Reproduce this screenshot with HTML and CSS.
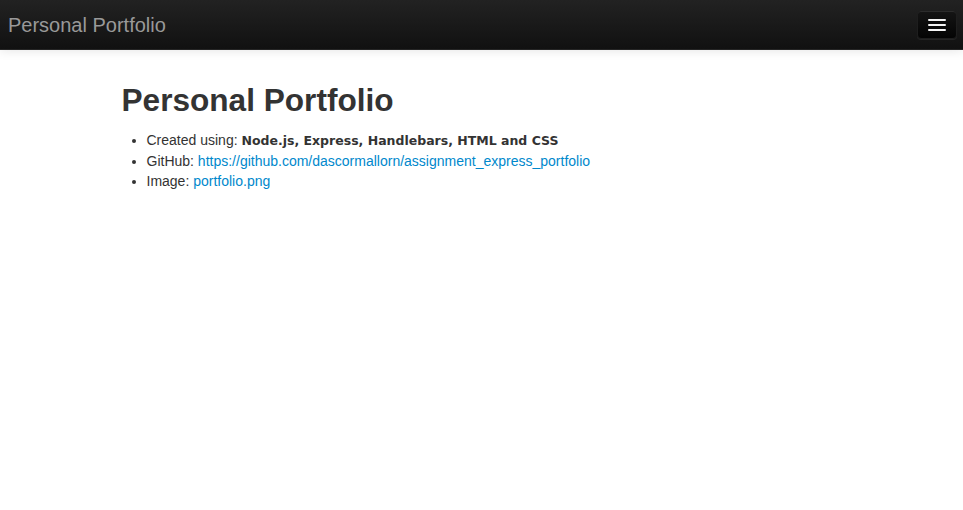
FILE: index.html
```html
<!DOCTYPE html>
<html>
<head>
<meta charset="utf-8">
<title>Personal Portfolio</title>
<link rel="stylesheet" href="styles.css">
</head>
<body>
<header class="navbar">
  <a class="brand" href="#">Personal Portfolio</a>
  <button class="toggle" type="button" aria-label="Menu">
    <span class="bar"></span><span class="bar"></span><span class="bar"></span>
  </button>
</header>
<main class="container">
  <h1 class="title">Personal Portfolio</h1>
  <ul class="details">
    <li>Created using: <strong class="tech">Node.js, Express, Handlebars, HTML and CSS</strong></li>
    <li>GitHub: <a href="#">https://github.com/dascormallorn/assignment_express_portfolio</a></li>
    <li>Image: <a href="#">portfolio.png</a></li>
  </ul>
</main>
</body>
</html>
```
FILE: styles.css
```css
html, body {
  margin: 0;
  padding: 0;
  background: #fff;
}
body {
  font-family: "Liberation Sans", Arial, sans-serif;
  font-size: 14px;
  line-height: 20px;
  color: #333;
}
.navbar {
  height: 49px;
  display: flex;
  align-items: center;
  justify-content: space-between;
  padding: 0 6px 0 8px;
  background: linear-gradient(to bottom, #222 0%, #111 100%);
  border-bottom: 1px solid #252525;
  box-shadow: 0 1px 10px rgba(0, 0, 0, 0.1);
}
.brand {
  color: #999;
  font-size: 20px;
  text-decoration: none;
  line-height: 20px;
}
.toggle {
  width: 40px;
  height: 29px;
  padding: 0;
  display: flex;
  flex-direction: column;
  align-items: center;
  justify-content: center;
  gap: 3px;
  background: linear-gradient(to bottom, #151515 0%, #040404 100%);
  border: 1px solid #1e1e1e;
  border-radius: 4px;
  box-shadow: inset 0 1px 0 rgba(255,255,255,0.1), 0 1px 0 rgba(255,255,255,0.075);
}
.bar {
  display: block;
  width: 18px;
  height: 2px;
  background: #f5f5f5;
  border-radius: 1px;
  box-shadow: 0 1px 0 rgba(0,0,0,0.25);
}
.container {
  width: 720px;
  margin: 0 auto;
  padding: 30px 15px 0;
}
.title {
  margin: 0 0 10px;
  font-size: 31.6px;
  line-height: 40px;
  font-weight: bold;
  color: #333;
}
.details {
  margin: 0 0 10px;
  padding-left: 25px;
}
.tech {
  font-family: "DejaVu Sans", Verdana, sans-serif;
  font-size: 12.5px;
}
.details a {
  color: #0088cc;
  text-decoration: none;
}
```
